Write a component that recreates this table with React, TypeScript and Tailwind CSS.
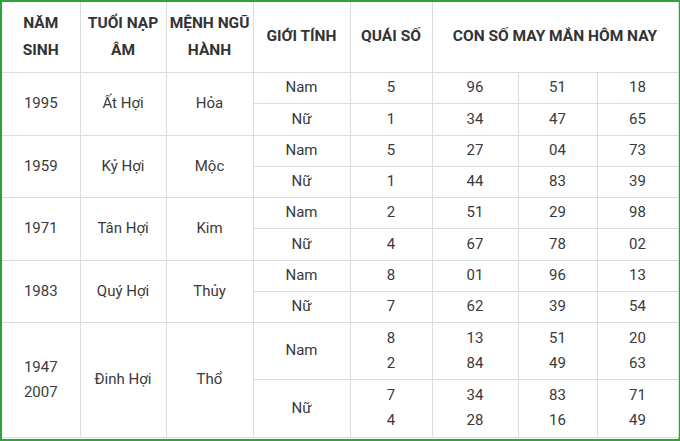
import React from "react";

type Group = {
  year: string[];
  napAm: string;
  menh: string;
  rows: { gender: string; quai: string[]; nums: string[][] }[];
};

const groups: Group[] = [
  {
    year: ["1995"],
    napAm: "Ất Hợi",
    menh: "Hỏa",
    rows: [
      { gender: "Nam", quai: ["5"], nums: [["96"], ["51"], ["18"]] },
      { gender: "Nữ", quai: ["1"], nums: [["34"], ["47"], ["65"]] },
    ],
  },
  {
    year: ["1959"],
    napAm: "Kỷ Hợi",
    menh: "Mộc",
    rows: [
      { gender: "Nam", quai: ["5"], nums: [["27"], ["04"], ["73"]] },
      { gender: "Nữ", quai: ["1"], nums: [["44"], ["83"], ["39"]] },
    ],
  },
  {
    year: ["1971"],
    napAm: "Tân Hợi",
    menh: "Kim",
    rows: [
      { gender: "Nam", quai: ["2"], nums: [["51"], ["29"], ["98"]] },
      { gender: "Nữ", quai: ["4"], nums: [["67"], ["78"], ["02"]] },
    ],
  },
  {
    year: ["1983"],
    napAm: "Quý Hợi",
    menh: "Thủy",
    rows: [
      { gender: "Nam", quai: ["8"], nums: [["01"], ["96"], ["13"]] },
      { gender: "Nữ", quai: ["7"], nums: [["62"], ["39"], ["54"]] },
    ],
  },
  {
    year: ["1947", "2007"],
    napAm: "Đinh Hợi",
    menh: "Thổ",
    rows: [
      { gender: "Nam", quai: ["8", "2"], nums: [["13", "84"], ["51", "49"], ["20", "63"]] },
      { gender: "Nữ", quai: ["7", "4"], nums: [["34", "28"], ["83", "16"], ["71", "49"]] },
    ],
  },
];

const rowHeights = [
  ["h-[31px]", "h-[32px]"],
  ["h-[31px]", "h-[31px]"],
  ["h-[31px]", "h-[32px]"],
  ["h-[31px]", "h-[31px]"],
  ["h-[57px]", "h-[58px]"],
];

function Lines({ items }: { items: string[] }) {
  return (
    <>
      {items.map((t, i) => (
        <div key={i} className="leading-[25px]">
          {t}
        </div>
      ))}
    </>
  );
}

const cell = "border border-[#dddddd] text-center align-middle p-0";

export default function App() {
  return (
    <div className="w-[680px] h-[441px] bg-white border-2 border-[#2fa33a] font-['Roboto',sans-serif] text-[15px] text-[#3a3a3a]">
      <table className="w-[676px] border-collapse table-fixed">
        <colgroup>
          <col className="w-[78px]" />
          <col className="w-[86px]" />
          <col className="w-[87px]" />
          <col className="w-[97px]" />
          <col className="w-[82px]" />
          <col className="w-[86px]" />
          <col className="w-[79px]" />
          <col className="w-[81px]" />
        </colgroup>
        <thead>
          <tr className="h-[70px] font-bold text-[15.5px] text-[#333] leading-[27px]">
            <th className={`${cell} border-t-0 border-l-0`}>
              NĂM
              <br />
              SINH
            </th>
            <th className={`${cell} border-t-0`}>
              TUỔI NẠP
              <br />
              ÂM
            </th>
            <th className={`${cell} border-t-0`}>
              MỆNH NGŨ
              <br />
              HÀNH
            </th>
            <th className={`${cell} border-t-0`}>GIỚI TÍNH</th>
            <th className={`${cell} border-t-0`}>QUÁI SỐ</th>
            <th className={`${cell} border-t-0`} colSpan={3}>
              CON SỐ MAY MẮN HÔM NAY
            </th>
          </tr>
        </thead>
        <tbody>
          {groups.map((g, gi) =>
            g.rows.map((r, ri) => (
              <tr key={`${gi}-${ri}`} className={rowHeights[gi][ri]}>
                {ri === 0 && (
                  <>
                    <td className={`${cell} border-l-0`} rowSpan={2}>
                      <Lines items={g.year} />
                    </td>
                    <td className={cell} rowSpan={2}>
                      {g.napAm}
                    </td>
                    <td className={cell} rowSpan={2}>
                      {g.menh}
                    </td>
                  </>
                )}
                <td className={cell}>{r.gender}</td>
                <td className={cell}>
                  <Lines items={r.quai} />
                </td>
                {r.nums.map((n, ni) => (
                  <td key={ni} className={cell}>
                    <Lines items={n} />
                  </td>
                ))}
              </tr>
            ))
          )}
        </tbody>
      </table>
    </div>
  );
}
